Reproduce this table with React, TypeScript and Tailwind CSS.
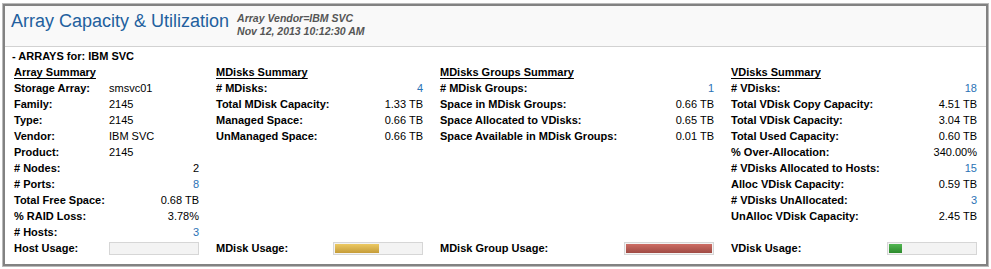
import React from 'react';

type Row = { label: string; value: string; link?: boolean; left?: boolean };

const arraySummary: Row[] = [
  { label: 'Storage Array:', value: 'smsvc01', left: true },
  { label: 'Family:', value: '2145', left: true },
  { label: 'Type:', value: '2145', left: true },
  { label: 'Vendor:', value: 'IBM SVC', left: true },
  { label: 'Product:', value: '2145', left: true },
  { label: '# Nodes:', value: '2' },
  { label: '# Ports:', value: '8', link: true },
  { label: 'Total Free Space:', value: '0.68 TB' },
  { label: '% RAID Loss:', value: '3.78%' },
  { label: '# Hosts:', value: '3', link: true },
];

const mdiskSummary: Row[] = [
  { label: '# MDisks:', value: '4', link: true },
  { label: 'Total MDisk Capacity:', value: '1.33 TB' },
  { label: 'Managed Space:', value: '0.66 TB' },
  { label: 'UnManaged Space:', value: '0.66 TB' },
];

const groupSummary: Row[] = [
  { label: '# MDisk Groups:', value: '1', link: true },
  { label: 'Space in MDisk Groups:', value: '0.66 TB' },
  { label: 'Space Allocated to VDisks:', value: '0.65 TB' },
  { label: 'Space Available in MDisk Groups:', value: '0.01 TB' },
];

const vdiskSummary: Row[] = [
  { label: '# VDisks:', value: '18', link: true },
  { label: 'Total VDisk Copy Capacity:', value: '4.51 TB' },
  { label: 'Total VDisk Capacity:', value: '3.04 TB' },
  { label: 'Total Used Capacity:', value: '0.60 TB' },
  { label: '% Over-Allocation:', value: '340.00%' },
  { label: '# VDisks Allocated to Hosts:', value: '15', link: true },
  { label: 'Alloc VDisk Capacity:', value: '0.59 TB' },
  { label: '# VDisks UnAllocated:', value: '3', link: true },
  { label: 'UnAlloc VDisk Capacity:', value: '2.45 TB' },
];

const UsageBar = ({ pct, fill }: { pct: number; fill: string }) => (
  <div className="h-[13px] w-[90px] border border-[#d6d6d6] bg-[#f3f3f3] p-[1px]">
    {pct > 0 && <div className={`h-full ${fill}`} style={{ width: `${pct}%` }} />}
  </div>
);

const Section = ({
  title,
  rows,
  usage,
  pct,
  fill,
}: {
  title: string;
  rows: Row[];
  usage: string;
  pct: number;
  fill: string;
}) => (
  <div className="flex h-[192px] flex-col">
    <div className="h-4 font-bold underline underline-offset-[2px]">{title}</div>
    {rows.map((r) => (
      <div key={r.label} className="flex h-4 items-center justify-between">
        <span className="font-bold">{r.label}</span>
        <span
          className={`w-[90px] ${r.left ? 'text-left' : 'text-right'} ${
            r.link ? 'text-[#2a72b5]' : 'text-black'
          }`}
        >
          {r.value}
        </span>
      </div>
    ))}
    <div className="mt-auto flex h-4 items-center justify-between">
      <span className="font-bold">{usage}</span>
      <UsageBar pct={pct} fill={fill} />
    </div>
  </div>
);

const App = () => {
  return (
    <div className="h-[269px] w-[991px] bg-white pl-[3px] pt-[4px] font-['Liberation_Sans',Arial,sans-serif]">
      <div className="h-[262px] w-[985px] border-2 border-[#828282] ring-1 ring-[#bababa]">
        {/* Header */}
        <div className="flex h-[41px] items-start border-b border-[#d2d2d2] bg-[#f9f9f9] pl-[6px] pt-[5px]">
          <h1 className="text-[18px] leading-[20px] text-[#22609e]">Array Capacity &amp; Utilization</h1>
          <div className="ml-[8px] mt-[1px] text-[10.5px] font-bold italic leading-[13px] text-[#555555]">
            <div>Array Vendor=IBM SVC</div>
            <div>Nov 12, 2013 10:12:30 AM</div>
          </div>
        </div>

        {/* Content */}
        <div className="pl-[7px] pt-[1px] text-[11px] leading-4 text-black">
          <div className="h-4 font-bold">- ARRAYS for: IBM SVC</div>
          <div className="grid grid-cols-[185px_207px_274px_246px] gap-x-[17px] pl-[2px]">
            <Section title="Array Summary" rows={arraySummary} usage="Host Usage:" pct={0} fill="" />
            <Section
              title="MDisks Summary"
              rows={mdiskSummary}
              usage="MDisk Usage:"
              pct={51}
              fill="bg-gradient-to-b from-[#ecc963] to-[#c59c38]"
            />
            <Section
              title="MDisks Groups Summary"
              rows={groupSummary}
              usage="MDisk Group Usage:"
              pct={100}
              fill="bg-gradient-to-b from-[#cd6d64] to-[#9f4a44]"
            />
            <Section
              title="VDisks Summary"
              rows={vdiskSummary}
              usage="VDisk Usage:"
              pct={15}
              fill="bg-gradient-to-b from-[#52b652] to-[#2c8a2c]"
            />
          </div>
        </div>
      </div>
    </div>
  );
};

export default App;
